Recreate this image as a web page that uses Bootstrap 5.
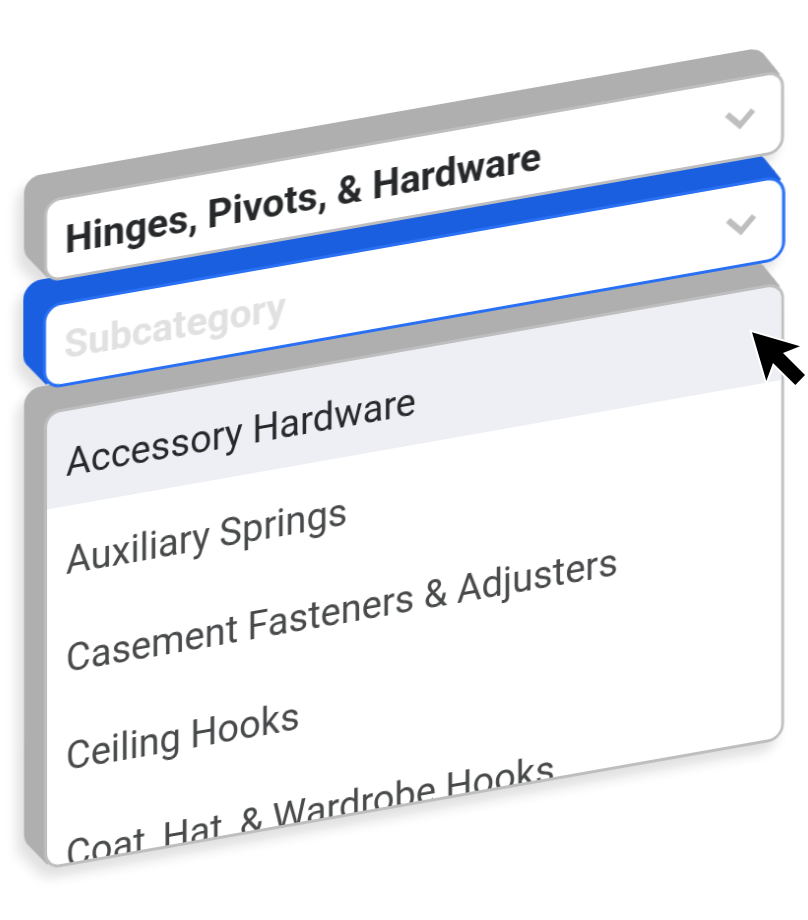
<!DOCTYPE html>
<html lang="en">
<head>
<meta charset="utf-8">
<meta name="viewport" content="width=device-width, initial-scale=1">
<title>Hardware categories</title>
<link rel="stylesheet" href="https://cdn.jsdelivr.net/npm/bootstrap@5.3.0/dist/css/bootstrap.min.css">
<style>
  body { background: #fff; font-family: Roboto, "Liberation Sans", sans-serif; }
  .scene { padding: 200px 24px 48px 44px; }
  .stack { transform: skewY(-10deg); transform-origin: left top; filter: drop-shadow(-7px 9px 6px rgba(0, 0, 0, .12)); }

  /* A slab is a front face plus the extruded side behind it */
  .slab { --side: #afafaf; --edge: #bebebe; --corner: 16px; margin-bottom: 22px; }
  .slab:nth-child(1) { z-index: 3; }
  .slab:nth-child(2) { z-index: 2; }
  .slab:nth-child(3) { z-index: 1; margin-bottom: 0; }
  .slab::before {
    content: ""; position: absolute; z-index: -1; inset: -26px 0 0 -20px;
    background: var(--side); border-radius: var(--corner) 0 0 0;
    clip-path: polygon(0 0, calc(100% - 33px) 0, calc(100% - 26px) 2px, calc(100% - 21px) 6px, calc(100% - 4px) 30px, calc(100% - 20px) 60px, 60px calc(100% - 20px), 23px calc(100% - 5px), 3px calc(100% - 29px), 1px calc(100% - 33px), 0 calc(100% - 38px));
  }
  .slab-active { --side: #1a5fe0; --edge: #2970f4; --corner: 18px; margin-left: -1px; margin-right: -1px; }
  .face { background: #fff; border: 3px solid var(--edge); border-radius: var(--corner); }

  .picker { appearance: none; font-size: 39px; line-height: 50px; font-weight: 700; color: #26282a; background: none; padding: 16px 0 11px 18px; }
  .picker-empty { color: #e1e1e1; padding-bottom: 13px; }
  .chevron { width: 32px; height: 20px; margin-right: 25px; }

  .options { max-height: 458px; overflow-y: auto; scrollbar-width: none; }
  .options::-webkit-scrollbar { display: none; }
  .option { font-size: 38px; line-height: 50px; color: #48494a; background: #fff; padding: 30px 19px 18px; }
  .option-hover { color: #26282a; background: #eeeff4; padding-top: 27px; }

  .pointer { width: 60px; height: 60px; right: 0; top: 328px; z-index: 5; }
</style>
<script src="https://cdn.jsdelivr.net/npm/bootstrap@5.3.0/dist/js/bootstrap.bundle.min.js"></script>
</head>
<body>
<main class="scene position-relative">
  <form class="stack">
    <div class="slab position-relative">
      <div class="face d-flex align-items-center">
        <label class="visually-hidden" for="category">Category</label>
        <select id="category" class="picker flex-grow-1 border-0">
          <option>Hinges, Pivots, &amp; Hardware</option>
        </select>
        <svg class="chevron flex-shrink-0" viewBox="0 0 32 20" aria-hidden="true"><path d="M3 3L16 16L29 3" fill="none" stroke="#bebebe" stroke-width="6"/></svg>
      </div>
    </div>
    <div class="slab slab-active position-relative">
      <div class="face d-flex align-items-center">
        <label class="visually-hidden" for="subcategory">Choose a subcategory</label>
        <select id="subcategory" class="picker picker-empty flex-grow-1 border-0">
          <option>Subcategory</option>
        </select>
        <svg class="chevron flex-shrink-0" viewBox="0 0 32 20" aria-hidden="true"><path d="M3 3L16 16L29 3" fill="none" stroke="#bebebe" stroke-width="6"/></svg>
      </div>
    </div>
    <div class="slab position-relative">
      <div class="face options d-flex flex-column">
        <button type="button" class="option option-hover border-0 text-start flex-shrink-0">Accessory Hardware</button>
        <button type="button" class="option border-0 text-start flex-shrink-0">Auxiliary Springs</button>
        <button type="button" class="option border-0 text-start flex-shrink-0">Casement Fasteners &amp; Adjusters</button>
        <button type="button" class="option border-0 text-start flex-shrink-0">Ceiling Hooks</button>
        <button type="button" class="option border-0 text-start flex-shrink-0">Coat, Hat, &amp; Wardrobe Hooks</button>
      </div>
    </div>
  </form>
  <svg class="pointer position-absolute" viewBox="445 265 180 180" aria-hidden="true">
    <path d="M457 278L601 320L550 340L616 406L587 436L520 370L500 424Z" fill="#000" stroke="#fff" stroke-width="12" paint-order="stroke"/>
  </svg>
</main>
</body>
</html>
